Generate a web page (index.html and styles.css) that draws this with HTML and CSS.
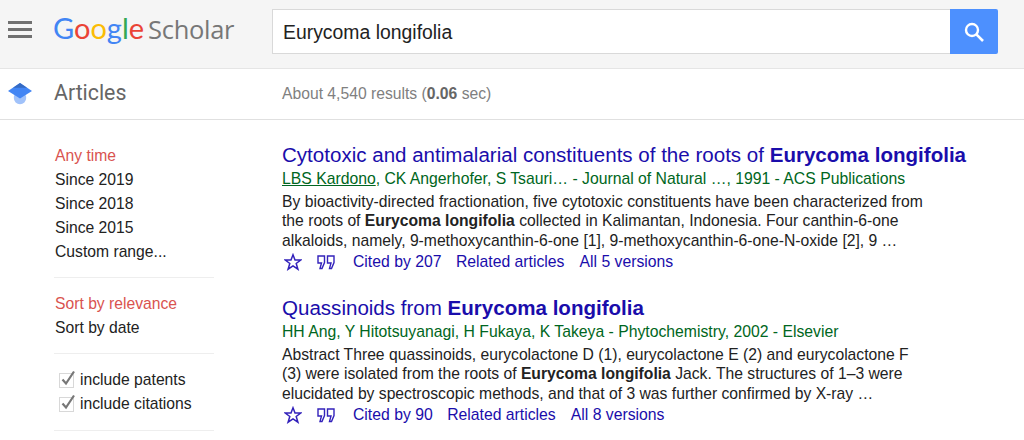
FILE: index.html
```html
<!DOCTYPE html>
<html lang="en">
<head>
<meta charset="utf-8">
<title>Google Scholar</title>
<link rel="stylesheet" href="styles.css">
</head>
<body>
<header class="top">
  <div class="menu" aria-label="Menu"><span></span><span></span><span></span></div>
  <div class="logo"><span class="g1">G</span><span class="g2">o</span><span class="g3">o</span><span class="g1">g</span><span class="g4">l</span><span class="g2">e</span><span class="sch">Scholar</span></div>
  <form class="search">
    <div class="query">Eurycoma longifolia</div>
    <div class="go">
      <svg width="22" height="22" viewBox="0 0 22 22"><circle cx="9" cy="9" r="6" fill="none" stroke="#fff" stroke-width="2.4"/><path d="M13.4 13.4 20 20" stroke="#fff" stroke-width="2.6"/></svg>
    </div>
  </form>
</header>
<div class="sub">
  <div class="cap">
    <svg width="24" height="22" viewBox="0 0 24 22"><circle cx="12" cy="15" r="6.200" fill="#a1c2fa"/><path d="M12 0 24 8 12 15.500 0 8Z" fill="#4285f4"/><path d="M12 0 19 4.700 5 4.700Z" fill="#356ac3"/></svg>
  </div>
  <div class="section">Articles</div>
  <div class="stats">About 4,540 results (<b>0.06</b> sec)</div>
</div>
<main class="body">
  <aside class="side">
    <ul class="group">
      <li class="on">Any time</li>
      <li>Since 2019</li>
      <li>Since 2018</li>
      <li>Since 2015</li>
      <li>Custom range...</li>
    </ul>
    <ul class="group">
      <li class="on">Sort by relevance</li>
      <li>Sort by date</li>
    </ul>
    <ul class="group checks">
      <li><svg class="chk" width="18" height="18" viewBox="0 0 18 18"><rect x="1.500" y="3.500" width="14" height="14" fill="#fff" stroke="#d8d8d8"/><path d="M4.500 9.500 8 13.500 16 1.500" fill="none" stroke="#777" stroke-width="2.200"/></svg>include patents</li>
      <li><svg class="chk" width="18" height="18" viewBox="0 0 18 18"><rect x="1.500" y="3.500" width="14" height="14" fill="#fff" stroke="#d8d8d8"/><path d="M4.500 9.500 8 13.500 16 1.500" fill="none" stroke="#777" stroke-width="2.200"/></svg>include citations</li>
    </ul>
  </aside>
  <section class="results">
    <article class="res">
      <h3 class="title">Cytotoxic and antimalarial constituents of the roots of <b>Eurycoma longifolia</b></h3>
      <div class="meta"><span class="au">LBS Kardono</span>, CK Angerhofer, S Tsauri… - Journal of Natural …, 1991 - ACS Publications</div>
      <p class="snip">By bioactivity-directed fractionation, five cytotoxic constituents have been characterized from<br>the roots of <b>Eurycoma longifolia</b> collected in Kalimantan, Indonesia. Four canthin-6-one<br>alkaloids, namely, 9-methoxycanthin-6-one [1], 9-methoxycanthin-6-one-N-oxide [2], 9 …</p>
      <div class="links">
        <svg class="star" width="18" height="18" viewBox="0 0 18 18"><path d="M9 1.800 11 7h5.800l-4.600 3.500 1.700 5.700L9 12.800l-4.900 3.400 1.700-5.700L1.200 7H7Z" fill="none" stroke="#3322bb" stroke-width="1.500"/></svg>
        <svg class="quote" width="18" height="15" viewBox="0 0 18 15"><path d="M1 1h6.500v6.500L5 13.500H3L4.500 8H1ZM10.500 1H17v6.500L14.500 13.500h-2L14 8h-3.500Z" fill="none" stroke="#3322bb" stroke-width="1.400"/></svg>
        <span>Cited by 207</span><span>Related articles</span><span>All 5 versions</span>
      </div>
    </article>
    <article class="res">
      <h3 class="title">Quassinoids from <b>Eurycoma longifolia</b></h3>
      <div class="meta">HH Ang, Y Hitotsuyanagi, H Fukaya, K Takeya - Phytochemistry, 2002 - Elsevier</div>
      <p class="snip">Abstract Three quassinoids, eurycolactone D (1), eurycolactone E (2) and eurycolactone F<br>(3) were isolated from the roots of <b>Eurycoma longifolia</b> Jack. The structures of 1–3 were<br>elucidated by spectroscopic methods, and that of 3 was further confirmed by X-ray …</p>
      <div class="links">
        <svg class="star" width="18" height="18" viewBox="0 0 18 18"><path d="M9 1.800 11 7h5.800l-4.600 3.500 1.700 5.700L9 12.800l-4.900 3.400 1.700-5.700L1.200 7H7Z" fill="none" stroke="#3322bb" stroke-width="1.500"/></svg>
        <svg class="quote" width="18" height="15" viewBox="0 0 18 15"><path d="M1 1h6.500v6.500L5 13.500H3L4.500 8H1ZM10.500 1H17v6.500L14.500 13.500h-2L14 8h-3.500Z" fill="none" stroke="#3322bb" stroke-width="1.400"/></svg>
        <span>Cited by 90</span><span>Related articles</span><span>All 8 versions</span>
      </div>
    </article>
  </section>
</main>
</body>
</html>
```
FILE: styles.css
```css
* { box-sizing: border-box; }
html, body { margin: 0; height: 440px; overflow: hidden; }
body { background: #fff; font-family: "Liberation Sans", Arial, sans-serif; color: #222; font-size: 15.700px; }
.top { height: 69px; background: #f5f5f5; border-bottom: 1px solid #e5e5e5; display: flex; align-items: flex-start; }
.menu { width: 24px; margin: 21px 0 0 8px; display: flex; flex-direction: column; gap: 4px; }
.menu span { display: block; height: 3px; background: #707070; }
.logo { margin: 10px 0 0 21px; width: 219px; font-family: "Lato", sans-serif; font-size: 29px; line-height: 36px; white-space: nowrap; }
.g1 { color: #4285f4; } .g2 { color: #ea4335; } .g3 { color: #fbbc05; } .g4 { color: #34a853; }
.sch { color: #777; margin-left: 4px; font-family: "Open Sans", sans-serif; font-size: 25.500px; letter-spacing: -0.3px; }
.search { margin: 9px 0 0 0; display: flex; width: 726px; height: 45px; }
.query { flex: 1; background: #fff; border: 1px solid #d9d9d9; border-right: 0; padding-left: 10px; font-size: 19.400px; line-height: 45px; color: #222; }
.go { width: 48px; background: #4d90fe; border-radius: 0 2px 2px 0; display: flex; align-items: center; justify-content: center; }
.sub { height: 51px; border-bottom: 1px solid #e0e0e0; display: flex; align-items: center; }
.cap { width: 54px; padding: 0 0 1px 8px; display: flex; }
.section { width: 228px; font-family: Roboto, sans-serif; font-size: 21.300px; color: #666; padding-bottom: 3px; }
.stats { color: #808080; }
.stats b { color: #666; }
.body { display: flex; padding-top: 23px; }
.side { width: 282px; padding: 1px 0 0 55px; }
.group { list-style: none; margin: 0 0 14px -1px; padding: 0 0 13px 1px; width: 160px; border-bottom: 1px solid #eeeeee; }
.group li { line-height: 24px; height: 24px; white-space: nowrap; color: #222; }
.group li.on { color: #d9534f; }
.checks { padding-bottom: 14px; }
.chk { margin: 0 4px 0 3px; vertical-align: -3px; }
.results { flex: 1; }
.res { margin-bottom: 23px; }
.title { margin: 0; font-weight: 400; font-size: 20.550px; line-height: 24px; color: #1a0dab; white-space: nowrap; }
.meta { color: #006621; font-size: 15.750px; line-height: 18px; margin-top: 3px; white-space: nowrap; }
.au { text-decoration: underline; }
.snip { margin: 3.500px 0 0; line-height: 19.500px; color: #222; white-space: nowrap; }
.links { display: flex; align-items: center; height: 22px; margin-top: 1px; font-size: 15.750px; color: #1a0dab; white-space: nowrap; }
.star { margin-left: 2px; }
.quote { margin-left: 15px; }
.links span { margin-left: 15px; }
.links .quote + span { margin-left: 18px; }
.links .quote + span + span { margin-left: 14.500px; }
```
